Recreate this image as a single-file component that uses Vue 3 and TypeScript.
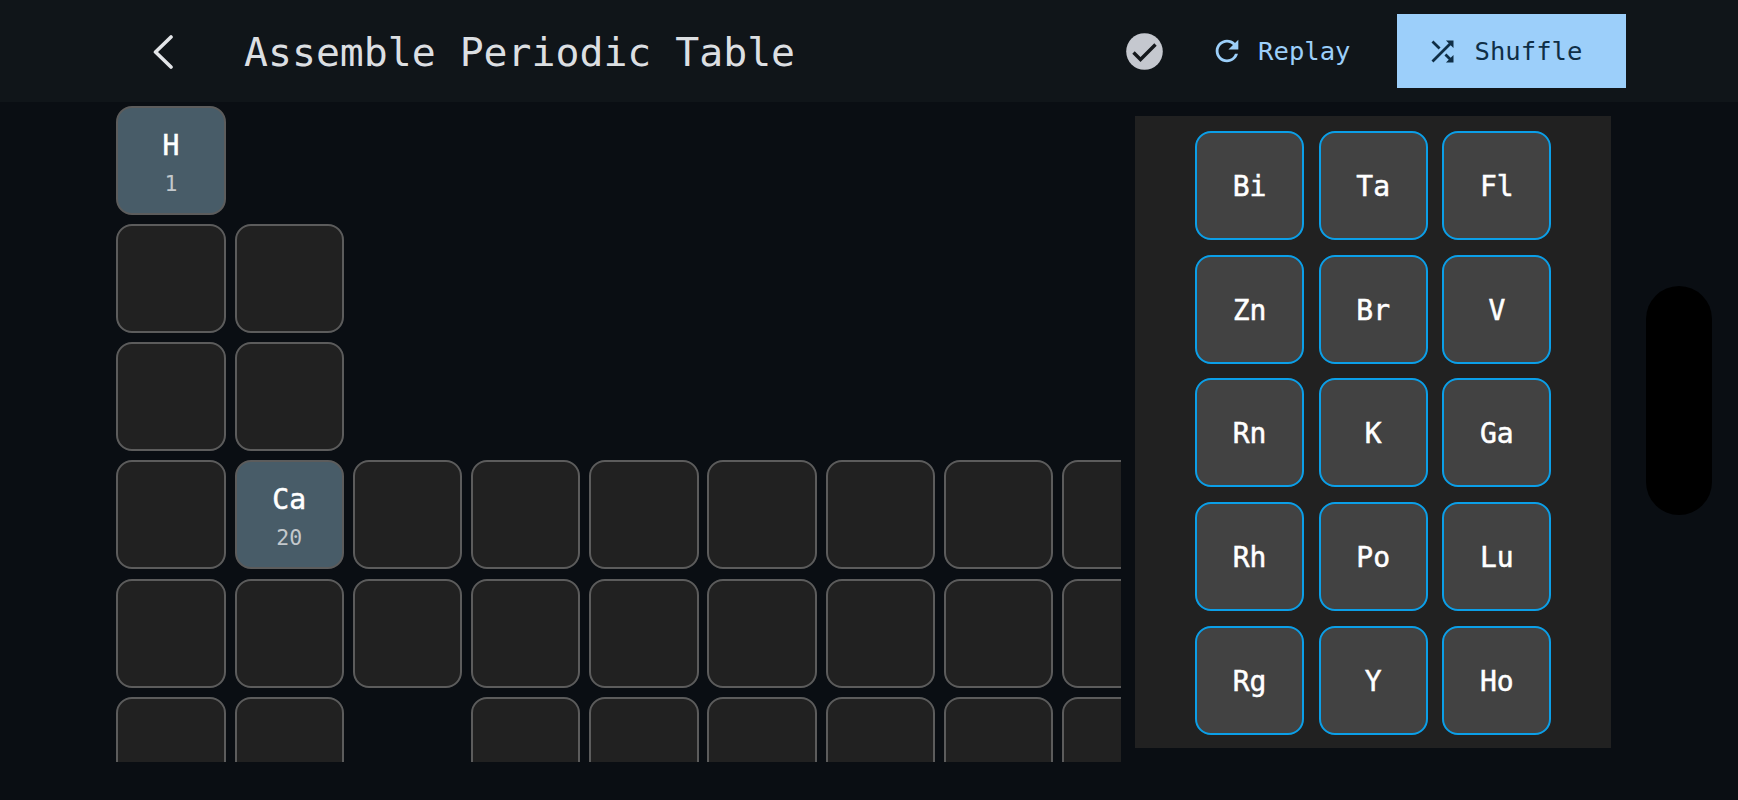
<template>
  <div class="page">
    <header class="topbar">
      <button class="back" aria-label="Back">
        <svg width="20" height="34" viewBox="0 0 20 34">
          <path d="M18 2 2.5 17 18 32" fill="none" stroke="currentColor" stroke-width="3.6" stroke-linecap="round" stroke-linejoin="round" />
        </svg>
      </button>
      <h1 class="title">Assemble Periodic Table</h1>

      <svg class="done" width="37" height="37" viewBox="0 0 37 37">
        <circle cx="18.5" cy="18.5" r="18.3" fill="#c5c8cf" />
        <path d="M7.5 19.5 14.5 26.5 29.5 11.5" fill="none" stroke="#15181c" stroke-width="3.4" />
      </svg>

      <button class="replay">
        <svg width="34" height="34" viewBox="0 0 24 24" fill="currentColor">
          <path d="M17.65 6.35A7.958 7.958 0 0 0 12 4c-4.42 0-7.99 3.58-7.99 8s3.57 8 7.99 8c3.73 0 6.84-2.55 7.73-6h-2.08A5.99 5.99 0 0 1 12 18c-3.31 0-6-2.69-6-6s2.69-6 6-6c1.66 0 3.14.69 4.22 1.78L13 11h7V4l-2.35 2.35z" />
        </svg>
        <span>Replay</span>
      </button>

      <button class="shuffle">
        <svg width="33" height="33" viewBox="0 0 24 24" fill="currentColor">
          <path d="M10.59 9.17 5.41 4 4 5.41l5.17 5.17 1.42-1.41zM14.5 4l2.04 2.04L4 18.59 5.41 20 17.96 7.46 20 9.5V4h-5.5zm.33 9.41-1.41 1.41 3.13 3.13L14.5 20H20v-5.5l-2.04 2.04-3.13-3.13z" />
        </svg>
        <span>Shuffle</span>
      </button>
    </header>

    <main class="board">
      <div class="table-clip">
        <div class="table-grid">
          <template v-for="cell in cells" :key="cell.id">
            <div v-if="cell.blank" class="blank" />
            <div v-else class="cell" :class="{ placed: cell.symbol }">
              <template v-if="cell.symbol">
                <span class="symbol">{{ cell.symbol }}</span>
                <span class="number">{{ cell.number }}</span>
              </template>
            </div>
          </template>
        </div>
      </div>

      <aside class="tray">
        <div v-for="el in tray" :key="el" class="tile">{{ el }}</div>
      </aside>
    </main>

    <div class="side-pill" />
  </div>
</template>

<script setup lang="ts">
interface Cell {
  id: string;
  blank: boolean;
  symbol?: string;
  number?: number;
}

const tray = ['Bi', 'Ta', 'Fl', 'Zn', 'Br', 'V', 'Rn', 'K', 'Ga', 'Rh', 'Po', 'Lu', 'Rg', 'Y', 'Ho'];

const placed: Record<string, { symbol: string; number: number }> = {
  '0-0': { symbol: 'H', number: 1 },
  '3-1': { symbol: 'Ca', number: 20 }
};

// which columns are empty in each period
const isBlank = (row: number, col: number): boolean => {
  if (row === 0) return col > 0 && col < 17;
  if (row === 1 || row === 2) return col > 1 && col < 12;
  if (row >= 5) return col === 2;
  return false;
};

const cells: Cell[] = [];
for (let row = 0; row < 7; row++) {
  for (let col = 0; col < 18; col++) {
    const id = `${row}-${col}`;
    cells.push({ id, blank: isBlank(row, col), ...placed[id] });
  }
}
</script>

<style>
html,
body {
  background: #0a0e13;
}
</style>

<style scoped>
.page {
  width: 1738px;
  height: 800px;
  overflow: hidden;
  background: #0a0e13;
  font-family: "DejaVu Sans Mono", "Liberation Mono", monospace;
  position: relative;
}

.topbar {
  height: 102px;
  box-sizing: border-box;
  display: flex;
  align-items: center;
  background: #101519;
  padding-left: 153px;
}

button {
  border: 0;
  background: none;
  padding: 0;
  font: inherit;
  display: flex;
  align-items: center;
}

.back {
  color: #e3e5e8;
  width: 20px;
  margin-top: 2px;
}

.title {
  margin: 2px 0 0 71px;
  font-size: 39.8px;
  font-weight: 400;
  color: #dcdfe2;
  white-space: nowrap;
}

.done {
  margin-left: 331px;
  flex: none;
}

.replay {
  margin-left: 47px;
  color: #9ccffa;
  font-size: 25.6px;
  gap: 14px;
}

.shuffle {
  margin-left: 46px;
  width: 229px;
  height: 74px;
  box-sizing: border-box;
  background: #9ccffa;
  color: #0f2e46;
  font-size: 25.6px;
  padding-left: 29px;
  gap: 16px;
}

.board {
  display: flex;
  align-items: flex-start;
  padding: 3.5px 0 0 116.3px;
}

.table-clip {
  width: 1004.7px;
  height: 656.7px;
  overflow: hidden;
  flex: none;
}

.table-grid {
  display: grid;
  grid-template-columns: repeat(18, 109.4px);
  grid-auto-rows: 109px;
  gap: 9.25px 8.85px;
  width: max-content;
}

.cell {
  box-sizing: border-box;
  border: 2px solid #5c5c5c;
  border-radius: 16px;
  background: #212121;
  display: flex;
  flex-direction: column;
  align-items: center;
}

.cell.placed {
  background: #485c68;
  color: #fff;
}

.symbol {
  margin-top: 21px;
  font-size: 28px;
  line-height: 34px;
  -webkit-text-stroke: 0.5px #fff;
}

.number {
  margin-top: 8px;
  font-size: 21.5px;
  line-height: 26px;
  color: #c3c8cc;
}

.tray {
  flex: none;
  box-sizing: border-box;
  margin: 10.5px 0 0 14.2px;
  width: 475.5px;
  height: 632px;
  padding: 15px 0 0 59.8px;
  background: #212121;
  display: grid;
  grid-template-columns: repeat(3, 109.3px);
  grid-auto-rows: 109px;
  gap: 14.7px 14.3px;
}

.tile {
  box-sizing: border-box;
  border: 2px solid #0b9fe8;
  border-radius: 16px;
  background: #424242;
  color: #fff;
  font-size: 28px;
  -webkit-text-stroke: 0.5px #fff;
  padding-top: 2px;
  display: flex;
  align-items: center;
  justify-content: center;
}

.side-pill {
  position: absolute;
  left: 1646px;
  top: 286px;
  width: 66px;
  height: 229px;
  border-radius: 33px;
  background: #000;
}
</style>
